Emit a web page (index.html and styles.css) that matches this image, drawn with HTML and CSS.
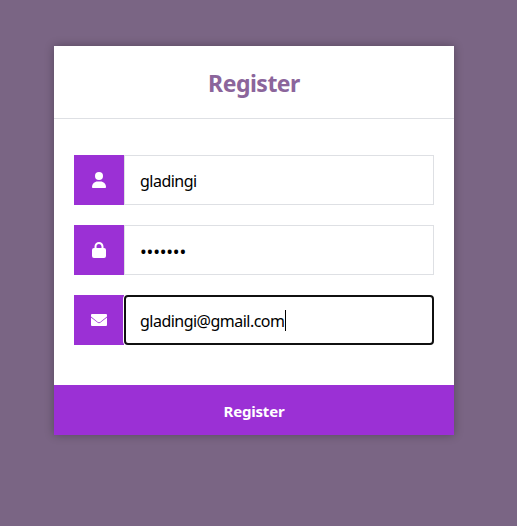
FILE: index.html
```html
<!DOCTYPE html>
<html lang="en">
<head>
<meta charset="utf-8">
<title>Register</title>
<link rel="stylesheet" href="styles.css">
</head>
<body>
<main class="card">
  <h1 class="title"><span>Register</span></h1>
  <form class="form">
    <div class="row">
      <label class="icon" for="username"><svg width="14" height="16" viewBox="0 0 14 16"><circle cx="7" cy="4" r="4"/><path d="M0 15.2C0 11.8 2.4 9.5 5.6 9.5h2.8c3.2 0 5.6 2.3 5.6 5.7 0 .5-.4.8-.8.8H.8c-.4 0-.8-.3-.8-.8z"/></svg></label>
      <div class="field"><input class="input" id="username" type="text" value="gladingi"></div>
    </div>
    <div class="row">
      <label class="icon" for="password"><svg width="14" height="16" viewBox="0 0 14 16"><path d="M2.5 6V4.5a4.5 4.5 0 0 1 9 0V6h.5a2 2 0 0 1 2 2v6a2 2 0 0 1-2 2H2a2 2 0 0 1-2-2V8a2 2 0 0 1 2-2zm2 0h5V4.5a2.5 2.5 0 0 0-5 0z"/></svg></label>
      <div class="field"><input class="input password" id="password" type="password" value="glading"></div>
    </div>
    <div class="row">
      <label class="icon" for="email"><svg width="16" height="12" viewBox="0 0 16 12"><path d="M1 0h14a1 1 0 0 1 1 1v1.5L9.2 7.9a2 2 0 0 1-2.4 0L0 2.5V1a1 1 0 0 1 1-1zM0 3.4l6.5 5.2a2.4 2.4 0 0 0 3 0L16 3.4V11a1 1 0 0 1-1 1H1a1 1 0 0 1-1-1z"/></svg></label>
      <div class="field focused"><input class="input email" id="email" type="text" value="gladingi@gmail.com"><i class="caret"></i></div>
    </div>
    <button class="submit" type="button"><span>Register</span></button>
  </form>
</main>
</body>
</html>
```
FILE: styles.css
```css
* { box-sizing: border-box; }
body {
  margin: 0;
  min-height: 526px;
  padding-top: 46px;
  background: #7a6584;
  font-family: "Noto Sans", sans-serif;
  font-size: 16px;
}
.card {
  width: 400px;
  margin-left: 54px;
  background: #fff;
  box-shadow: 0 0 9px rgba(0, 0, 0, .3);
}
.title {
  height: 73px;
  margin: 0;
  border-bottom: 1px solid #dee0e4;
  color: #8b659b;
  font-size: 23px;
  font-weight: 700;
  line-height: 74px;
  text-align: center;
  letter-spacing: -.5px;
}
.form {
  display: flex;
  flex-direction: column;
  padding-top: 36px;
}
.row {
  display: flex;
  height: 50px;
  margin: 0 20px 20px;
}
.icon {
  display: flex;
  align-items: center;
  justify-content: center;
  width: 50px;
  background: #9b30d5;
}
.icon svg { fill: #fff; }
.field {
  position: relative;
  width: 310px;
  border: 1px solid #dee0e4;
}
.input {
  display: block;
  width: 100%;
  height: 100%;
  padding: 1px 15px 0;
  border: 0;
  outline: 0;
  background: transparent;
  color: #000;
  font: 16px "Noto Sans", sans-serif;
  letter-spacing: -.52px;
}
.password {
  padding-top: 2px;
  font-size: 18px;
  letter-spacing: -.2px;
}
.focused {
  border: 2px solid #101010;
  border-radius: 4px;
  box-shadow: -1px 0 0 #fff;
}
.focused .input { padding-left: 14px; }
.caret {
  position: absolute;
  left: 159px;
  top: 13px;
  width: 1px;
  height: 21px;
  background: #000;
}
.submit {
  height: 50px;
  margin-top: 20px;
  padding: 1px 0 0;
  border: 0;
  background: #9b30d5;
  color: #fff;
  font: 700 15px "Noto Sans", sans-serif;
  letter-spacing: -.2px;
}
```
